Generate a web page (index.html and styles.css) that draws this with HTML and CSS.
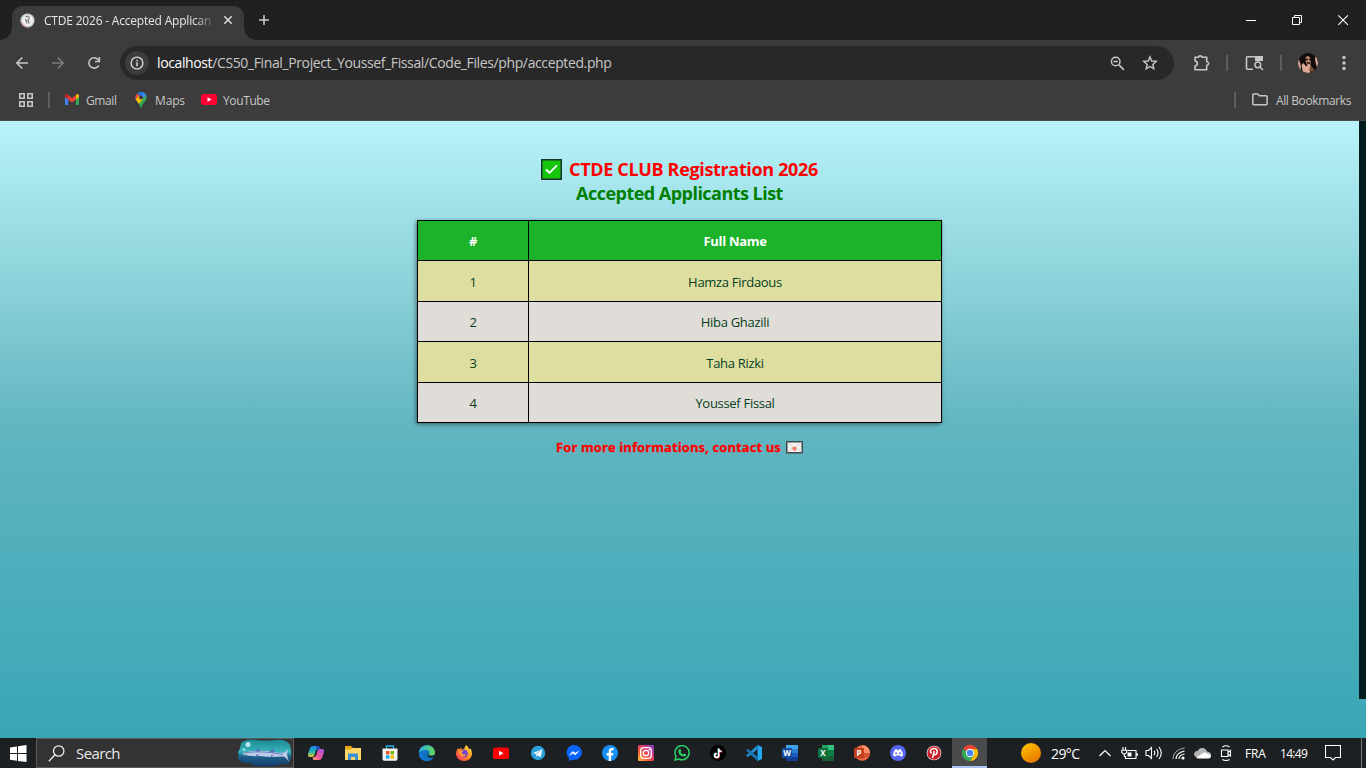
FILE: index.html
```html
<!DOCTYPE html>
<html lang="en">
<head>
<meta charset="utf-8">
<title>CTDE 2026 - Accepted Applicants</title>
<link rel="stylesheet" href="styles.css">
</head>
<body>
<div class="screen">
  <header class="tabstrip">
    <div class="tab">
      <svg class="favicon" width="15" height="15" viewBox="0 0 15 15"><circle cx="7.500" cy="7.500" r="7" fill="#eee"/><circle cx="7.500" cy="7.500" r="6.200" fill="none" stroke="#aeb9c4" stroke-width=".8"/><path d="M5.500 4.200C7 2.800 9.500 3.200 9.200 5.400 8.900 7.400 6.500 7 6.200 9M8.300 7.200l.8 3.500M5.500 6l1.500 4.500" fill="none" stroke="#858585" stroke-width="1.200"/><path d="M1.500 9c.8 3 3 4.500 5 4.800" stroke="#d77f7f" fill="none"/></svg>
      <span class="tab-title">CTDE 2026 - Accepted Applican</span>
      <svg class="tab-close" width="10" height="10" viewBox="0 0 10 10"><path d="M1.300 1.300l7.400 7.400M8.700 1.300L1.300 8.700" stroke="#dedede" stroke-width="1.500"/></svg>
    </div>
    <svg class="newtab" width="12" height="12" viewBox="0 0 12 12"><path d="M6 1v10M1 6h10" stroke="#d0d0d0" stroke-width="1.500"/></svg>
    <div class="winctl">
      <svg width="46" height="40" viewBox="0 0 46 40"><path d="M18 20.500h10" stroke="#fff"/></svg>
      <svg width="46" height="40" viewBox="0 0 46 40"><path d="M18.500 17.500h7v7h-7zM20.500 17.500v-2h7v7h-2" fill="none" stroke="#fff"/></svg>
      <svg width="46" height="40" viewBox="0 0 46 40"><path d="M18.300 15.300l9.600 9.600M27.900 15.300l-9.600 9.600" stroke="#fff" stroke-width="1.100"/></svg>
    </div>
  </header>

  <nav class="toolbar">
    <svg class="back" width="14" height="14" viewBox="0 0 14 14"><path d="M13 7H2M7.300 1.500L1.800 7l5.500 5.500" fill="none" stroke="#c7c7c7" stroke-width="1.600"/></svg>
    <svg class="forward" width="14" height="14" viewBox="0 0 14 14"><path d="M1 7h11M6.700 1.500L12.200 7l-5.500 5.500" fill="none" stroke="#7c7c7c" stroke-width="1.600"/></svg>
    <svg class="reload" width="14" height="14" viewBox="0 0 14 14"><path d="M11.700 9.300A5.200 5.200 0 1 1 11 3.500L12.300 5" fill="none" stroke="#c7c7c7" stroke-width="1.600"/><path d="M12.400 1v4.400H8" fill="none" stroke="#c7c7c7" stroke-width="1.500"/></svg>
    <div class="omnibox">
      <span class="info"><svg width="14" height="14" viewBox="0 0 14 14"><circle cx="7" cy="7" r="5.900" fill="none" stroke="#d6d6d6" stroke-width="1.400"/><path d="M7 6.200V10.300M7 3.700v1.500" stroke="#d6d6d6" stroke-width="1.500"/></svg></span>
      <span class="url"><b>localhost</b>/CS50_Final_Project_Youssef_Fissal/Code_Files/php/accepted.php</span>
      <svg class="zoomout" width="15" height="15" viewBox="0 0 15 15"><circle cx="5.700" cy="5.500" r="4.300" fill="none" stroke="#c7c7c7" stroke-width="1.500"/><path d="M3.500 5.500h4.400M8.900 8.900l5 5" stroke="#c7c7c7" stroke-width="1.500"/></svg>
      <svg class="star" width="16" height="16" viewBox="0 0 16 16"><path d="M8 1.900l1.750 4.100 4.500.4-3.400 3 1 4.400L8 11.500l-3.850 2.300 1-4.400-3.400-3 4.500-.4z" fill="none" stroke="#c7c7c7" stroke-width="1.400"/></svg>
    </div>
    <svg class="ext" width="18" height="18" viewBox="0 0 18 18"><path d="M2 3.200h3.600c.2-1.800 3.200-1.800 3.400 0h4.700v4.600c2.600.2 2.600 3.200 0 3.400v4.500H2v-3.600c3-.5 3-4.700 0-5.200z" fill="none" stroke="#c7c7c7" stroke-width="1.600" stroke-linejoin="round"/></svg>
    <i class="bar b1"></i>
    <svg class="lens" width="19" height="16" viewBox="0 0 19 16"><path d="M8 14.200H2.500a1 1 0 0 1-1-1V2.800a1 1 0 0 1 1-1H16a1 1 0 0 1 1 1V6" fill="none" stroke="#c7c7c7" stroke-width="1.600"/><path d="M10 1h8v5h-8z" fill="#c7c7c7"/><circle cx="12.800" cy="9.800" r="2.900" fill="none" stroke="#c7c7c7" stroke-width="1.500"/><path d="M15 12l3 3" stroke="#c7c7c7" stroke-width="1.500"/></svg>
    <i class="bar b2"></i>
    <svg class="avatar" width="20" height="20" viewBox="0 0 20 20"><clipPath id="av"><circle cx="10" cy="10" r="10"/></clipPath><g clip-path="url(#av)"><path d="M0 0h20v20H0z" fill="#120d0c"/><path d="M0 5q3 4 3 12H0zM17 4h3v12q-3-5-3-12z" fill="#d3a596"/><path d="M7.500 4.500q2-3 4.500 0l1 6q-3 3-5 0z" fill="#c0896f"/><path d="M7 6.500h3M11 6.500h2M8.500 10h4" stroke="#241513" stroke-width="1.500"/><path d="M3.500 12l2-2 2.500 3.500 3-2.500 2 1-1.500 4.500 1 3.500H5z" fill="#dca891"/><path d="M12.500 12l4 5-2 2-3-1z" fill="#7c4c3b"/></g></svg>
    <svg class="dots" width="4" height="16" viewBox="0 0 4 16"><g fill="#c7c7c7"><circle cx="2" cy="2.500" r="1.700"/><circle cx="2" cy="8" r="1.700"/><circle cx="2" cy="13.500" r="1.700"/></g></svg>
  </nav>

  <nav class="bookmarks">
    <svg class="apps" width="14" height="14" viewBox="0 0 14 14"><path d="M.8.8h4.400v4.400H.8zM8.800.8h4.400v4.400H8.800zM.8 8.800h4.400v4.400H.8zM8.800 8.800h4.400v4.400H8.800z" fill="none" stroke="#c7c7c7" stroke-width="1.600"/></svg>
    <i class="bar b3"></i>
    <svg class="gm" width="14" height="11" viewBox="0 0 14 11"><path d="M0 1.500L3.200 4v7H1a1 1 0 0 1-1-1z" fill="#4285f4"/><path d="M14 1.500L10.800 4v7H13a1 1 0 0 0 1-1z" fill="#34a853"/><path d="M10.800 1L12.300.1Q14 0 14 2v1l-3.200 2.700z" fill="#fbbc04"/><path d="M0 3V2Q0 0 1.700.1L3.200 1v4.700z" fill="#c5221f"/><path d="M3.200.9L7 3.900 10.800.9v4.800L7 8.600 3.200 5.700z" fill="#ea4335"/></svg>
    <span class="bm t-gmail">Gmail</span>
    <svg class="mp" width="12" height="16" viewBox="0 0 12 16"><clipPath id="pin"><path d="M6 0a5.600 5.600 0 0 1 5.600 5.600C11.600 9 7.800 10 6.600 15.300q-.6 1-1.200 0C4.200 10 .4 9 .4 5.600A5.600 5.600 0 0 1 6 0z"/></clipPath><g clip-path="url(#pin)"><path d="M0 0h12v16H0z" fill="#34a853"/><path d="M0 10L11 0H5L0 6z" fill="#4285f4"/><path d="M5 0h7v3L6 8z" fill="#4285f4"/><path d="M0 0h2.500L6 4 1 8H0z" fill="#ea4335"/><path d="M0 8l4-4 4 3-5 6z" fill="#fbbc04"/><path d="M3 0h6L6 4 2 2z" fill="#1a73e8"/></g><circle cx="6" cy="5.600" r="2" fill="#3c3c3c"/></svg>
    <span class="bm t-maps">Maps</span>
    <svg class="yt" width="16" height="11" viewBox="0 0 16 11"><rect width="16" height="11" rx="2.500" fill="#ff0033"/><path d="M6.500 3.200v4.600l4-2.300z" fill="#fff"/></svg>
    <span class="bm t-yt">YouTube</span>
    <i class="bar b4"></i>
    <svg class="folder" width="16" height="13" viewBox="0 0 16 13"><path d="M.8 10.800V1.900A1 1 0 0 1 1.800.9h4l1.700 1.800h6.600a1 1 0 0 1 1 1v7.100a1 1 0 0 1-1 1H1.800a1 1 0 0 1-1-1z" fill="none" stroke="#c7c7c7" stroke-width="1.500"/></svg>
    <span class="bm t-all">All Bookmarks</span>
  </nav>

  <div class="viewport">
    <main class="page">
      <h1 class="title">
        <span class="line1"><svg width="21" height="21" viewBox="0 0 21 21"><rect x=".75" y=".75" width="19.500" height="19.500" fill="#16c60c" stroke="#18312c" stroke-width="1.500"/><path d="M5 10.500l3.500 3.300L16 6.300" fill="none" stroke="#fff" stroke-width="1.900"/></svg><span class="red">CTDE CLUB Registration 2026</span></span>
        <span class="green">Accepted Applicants List</span>
      </h1>
      <div class="list">
        <div class="th">#</div><div class="th">Full Name</div>
        <div>1</div><div>Hamza Firdaous</div>
        <div class="alt">2</div><div class="alt">Hiba Ghazili</div>
        <div>3</div><div>Taha Rizki</div>
        <div class="alt">4</div><div class="alt">Youssef Fissal</div>
      </div>
      <p class="contact"><span class="contact-text">For more informations, contact us</span><svg width="17" height="13" viewBox="0 0 17 13"><rect x=".75" y=".75" width="15.500" height="11" fill="#f1f0f0" stroke="#40484b" stroke-width="1.500"/><path d="M1.500 1.500l7 5.500 7-5.500M1.500 11.200l5-4.500M15.500 11.200l-5-4.500" fill="none" stroke="#d4d4d4" stroke-width=".8"/><circle cx="8.500" cy="7.700" r="2.100" fill="#ed7864"/></svg></p>
    </main>
    <div class="scroll"></div>
  </div>

  <footer class="taskbar">
    <svg class="win" width="17" height="17" viewBox="0 0 17 17"><path d="M0 2.400L7 1.400v6.700H0zM8 1.200L16.500 0v8.100H8zM0 9h7v6.700l-7-1zM8 9h8.500v8L8 15.900z" fill="#fff"/></svg>
    <div class="search">
      <svg class="glass" width="17" height="17" viewBox="0 0 17 17"><circle cx="10.700" cy="6" r="5.200" fill="none" stroke="#eee" stroke-width="1.300"/><path d="M7 9.800L.8 16.300" stroke="#eee" stroke-width="1.300"/></svg>
      <span class="search-text">Search</span>
      <svg class="fish" width="56" height="28" viewBox="0 0 56 28"><defs><linearGradient id="sea" x1="0" y1="0" x2="0" y2="1"><stop offset="0" stop-color="#1b8791"/><stop offset=".45" stop-color="#37b3ba"/><stop offset=".65" stop-color="#1c5e88"/><stop offset="1" stop-color="#153e6c"/></linearGradient></defs><path d="M4 4Q10-1 20 1q9 1 18 0 12-1 15 5 2 7 1 13-1 7-10 6-8 3-18 2-10 1-12-3Q2 25 1 19q1-3 0-6 2-2 3-9z" fill="url(#sea)"/><path d="M5 15q3-2.500 11-3 10-1 20 1 6 1 11 .5 3-1 4-4l-1 6 2 8q-2-5-6-6-13 1-23-.5-9 1-18-2z" fill="#bccbe8"/><path d="M18 12l4-3 1 4M32 13l5-4v5M20 15l-2 3 4-2M34 16v2l3-2" fill="#566fb0"/><path d="M10 13.500q15-2 36 2" stroke="#7181bf" fill="none"/><circle cx="11" cy="5.500" r="2.500" fill="#b6e9ef"/><circle cx="7" cy="10.500" r="1.500" fill="#8ed8df"/><circle cx="9" cy="14" r=".6" fill="#222"/></svg>
    </div>
    <div class="apps-row">
      <span><svg viewBox="0 0 16 16"><defs><linearGradient id="cpa" x1="0" y1="0" x2="0" y2="1"><stop stop-color="#168be9"/><stop offset=".55" stop-color="#27b6ae"/><stop offset="1" stop-color="#f5c324"/></linearGradient><linearGradient id="cpb" x1="1" y1="0" x2="0" y2="1"><stop stop-color="#a455ed"/><stop offset=".6" stop-color="#ed5798"/><stop offset="1" stop-color="#ffa55f"/></linearGradient></defs><path d="M5 1h5q1 0 1.600 2L8 5 6.500 10Q6 12 4 12H2q-3 0-1.700-4L2 3Q3 1 5 1z" fill="url(#cpa)"/><path d="M11 15H6q-1 0-1.600-2L8 11l1.500-5Q10 4 12 4h2q3 0 1.700 4L14 13q-1 2-3 2z" fill="url(#cpb)"/><path d="M8 1h2.500q1.200.6 1.600 3Q10 4 9 6z" fill="#244dc4"/></svg></span>
      <span><svg viewBox="0 0 16 16"><path d="M0 1h6l2 2h8v4H0z" fill="#e3a51b"/><path d="M0 4.500h6L8 3h8v12H0z" fill="#ffd765"/><path d="M3 15V8.500h10V15h-3v-3H6v3z" fill="#388ed6"/></svg></span>
      <span><svg viewBox="0 0 16 16"><path d="M4.500 4V1h7v3" fill="none" stroke="#2aaae2" stroke-width="1.300"/><path d="M.5 3.500h15V14a1.700 1.700 0 0 1-1.700 1.700H2.200A1.700 1.700 0 0 1 .5 14z" fill="#f2f2f2"/><path d="M4 6h3.400v3.400H4z" fill="#f25022"/><path d="M8.500 6H12v3.400H8.500z" fill="#7fba00"/><path d="M4 10.300h3.400v3.300H4z" fill="#00a4ef"/><path d="M8.500 10.300H12v3.300H8.500z" fill="#ffb900"/></svg></span>
      <span><svg viewBox="0 0 16 16"><defs><linearGradient id="edg"><stop stop-color="#28aee8"/><stop offset="1" stop-color="#68d851"/></linearGradient></defs><circle cx="8" cy="8" r="8" fill="#0e70bd"/><path d="M0 8C0-1 14-3 16 7q0 4-4 4-4 0-2-2 1-4-3-4-5 0-7 3z" fill="url(#edg)"/><path d="M7 5Q1 11 8 14q3 1 6-1-2 3-6 3Q2 16 0 11q0-5 7-6z" fill="#1475d1"/><path d="M9 8.500q-1.500 3 2 4 2.500.5 4.500-.800l.5-1.700q-3 1.200-5.500.2-1.500-.7-1.500-1.700z" fill="#1d2022"/></svg></span>
      <span><svg viewBox="0 0 16 16"><defs><linearGradient id="ffx" x1="1" y1="0" x2="0" y2="1"><stop stop-color="#fff13f"/><stop offset=".5" stop-color="#ff8a22"/><stop offset="1" stop-color="#f72967"/></linearGradient></defs><path d="M2 3l1 1.500 2-2 .5 2L8 4l2-4q2 1 3 4l1.500-.5Q16 6 16 8.500C16 13 12.500 16 8 16S0 12.500 0 8.500Q0 5 2 3z" fill="url(#ffx)"/><circle cx="8" cy="8.600" r="3.800" fill="#7542dc"/><path d="M3 5.500l5 .5q-3 1-1.500 3 2 1 3.500-.5-.5 4-4.500 3Q3 10 3 5.500z" fill="#ff9934"/></svg></span>
      <span><svg viewBox="0 0 16 16"><rect y="2.500" width="16" height="11.500" rx="2.600" fill="#f00"/><path d="M6 5.800v5l4.500-2.500z" fill="#fff"/></svg></span>
      <span><svg viewBox="0 0 16 16"><circle cx="8" cy="8" r="7.200" fill="#2ba0da"/><path d="M3 8l9.300-3.800-1.700 8-2.700-1.800-1.400 1.400-.4-2.500z" fill="#fff"/><path d="M6 9.300l4.500-3.500" stroke="#7abce0"/></svg></span>
      <span><svg viewBox="0 0 16 16"><path d="M8 0a7.800 7.400 0 0 1 0 15l-2-.3L2.900 16v-3A7.600 7.600 0 0 1 8 0z" fill="#0866ff"/><path d="M3.800 9.900l3-3.300 2.500 1.700 3-1.800-3 3.300-2.500-1.700z" fill="#fff" stroke="#fff" stroke-width=".8"/></svg></span>
      <span><svg viewBox="0 0 16 16"><circle cx="8" cy="8" r="8" fill="#1790f5"/><path d="M6.700 16v-5.500H4.600V8h2.100V6.200Q6.700 3 10 3h1.600v2.300h-1.200q-1.300 0-1.300 1.100V8h2.300l-.4 2.500H9.100V16z" fill="#fff"/></svg></span>
      <span><svg viewBox="0 0 16 16"><defs><linearGradient id="insta" x1="0" y1="1" x2="1" y2="0"><stop stop-color="#ffc53b"/><stop offset=".35" stop-color="#fb5637"/><stop offset=".65" stop-color="#d73282"/><stop offset="1" stop-color="#7545d1"/></linearGradient></defs><rect width="16" height="16" rx="1.500" fill="url(#insta)"/><rect x="2.700" y="2.700" width="10.600" height="10.600" rx="3" fill="none" stroke="#fff" stroke-width="1.300"/><circle cx="8" cy="8" r="2.700" fill="none" stroke="#fff" stroke-width="1.300"/><circle cx="11.300" cy="4.700" r=".8" fill="#fff"/></svg></span>
      <span><svg viewBox="0 0 16 16"><path d="M1 15l1-3.600A7.100 7.100 0 1 1 4.800 14z" fill="none" stroke="#28cf65" stroke-width="1.500"/><path d="M5 4.300q1-.8 1.700.3l.6 1.500-.8 1q1 1.800 2.700 2.500l1-1 2 1q0 2.200-2.400 2Q5 11 4.300 6.700q0-1.700.7-2.400z" fill="#28cf65"/></svg></span>
      <span><svg viewBox="0 0 16 16"><circle cx="8" cy="8" r="8" fill="#000"/><g fill="none" stroke-width="1.500"><path d="M8.300 3.300v6.900a2 2 0 1 1-2-2M8.300 3.800q.5 2.200 3 2.400" stroke="#25f4ee"/><path d="M9.100 4v6.900a2 2 0 1 1-2-2M9.100 4.500q.5 2.200 3 2.400" stroke="#fe2c55"/><path d="M8.700 3.600v6.900a2 2 0 1 1-2-2M8.700 4.100q.5 2.200 3 2.400" stroke="#fff"/></g></svg></span>
      <span><svg viewBox="0 0 16 16"><path d="M11.500 0L16 2v12l-4.500 2z" fill="#23a9f2"/><path d="M11.500 0v4.300L2 12 0 10.700z" fill="#218fce"/><path d="M11.500 16v-4.300L2 4 0 5.300z" fill="#1679bd"/></svg></span>
      <span><svg viewBox="0 0 16 16"><path d="M4 0h12v4H4z" fill="#41a5ee"/><path d="M4 4h12v4H4z" fill="#2b7cd3"/><path d="M4 8h12v8H4z" fill="#185abd"/><path d="M4 12h12v4H4z" fill="#103f91"/><rect y="3" width="10" height="10" rx=".8" fill="#164f9f"/><text x="5" y="11" text-anchor="middle" class="glyph">W</text></svg></span>
      <span><svg viewBox="0 0 16 16"><path d="M4 0h6v5H4z" fill="#21a366"/><path d="M10 0h6v5h-6z" fill="#33c481"/><path d="M4 5h12v6H4z" fill="#107c41"/><path d="M4 11h12v5H4z" fill="#185c37"/><rect y="3" width="10" height="10" rx=".8" fill="#0d713b"/><text x="5" y="11" text-anchor="middle" class="glyph">X</text></svg></span>
      <span><svg viewBox="0 0 16 16"><circle cx="8.300" cy="8" r="7.700" fill="#ed6c47"/><path d="M8.300.3A7.700 7.700 0 0 1 16 8H8.300z" fill="#ff8f6b"/><path d="M1 8h15a7.700 7.700 0 0 1-15 0z" fill="#d35230"/><rect y="3" width="10" height="10" rx=".8" fill="#c43e1c"/><text x="5" y="11" text-anchor="middle" class="glyph">P</text></svg></span>
      <span><svg viewBox="0 0 16 16"><circle cx="8" cy="8" r="8" fill="#5865f2"/><path d="M5 4.400l1.700-.3.500.8h1.600l.5-.8 1.700.3q2 3 1.900 6.400l-2 1-.8-1.200H5.900l-.8 1.200-2-1Q3 7.400 5 4.400z" fill="#fff"/><circle cx="6.100" cy="8.200" r="1" fill="#5865f2"/><circle cx="9.900" cy="8.200" r="1" fill="#5865f2"/></svg></span>
      <span><svg viewBox="0 0 16 16"><circle cx="8" cy="8" r="7.300" fill="#fff"/><circle cx="8" cy="8" r="6.700" fill="#cb1f27"/><path d="M5.500 8.400C3 6 5.500 3.200 8.500 3.500c4 .5 3.300 6-.1 6.200q-1 0-1.400-.8M8.300 6L6.500 13" fill="none" stroke="#fff" stroke-width="1.500"/></svg></span>
      <span class="active"><svg viewBox="0 0 16 16"><path d="M8 8L1 4a8 8 0 0 1 14 0z" fill="#ea4335"/><path d="M8 8l-7-4a8 8 0 0 0 7 12l4-6z" fill="#34a853"/><path d="M8 4h7a8 8 0 0 1-7 12l4-6z" fill="#fbbc04"/><circle cx="8" cy="8" r="4.200" fill="#fff"/><circle cx="8" cy="8" r="3.200" fill="#4285f4"/></svg></span>
    </div>
    <div class="tray">
      <i class="sun"></i><span class="temp">29°C</span>
      <svg class="caret" width="12" height="8" viewBox="0 0 12 8"><path d="M.5 7L6 1.500 11.500 7" fill="none" stroke="#fff" stroke-width="1.200"/></svg>
      <svg class="batt" width="17" height="13" viewBox="0 0 17 13"><path d="M6.500 3.500h8.500v8H4.500V9M16.200 6v3M2 0v3M4.500 0v3M.7 3.300h5v2L4.200 7H2.500L.8 5.500zM3.300 7v3" fill="none" stroke="#fff" stroke-width="1.100"/><path d="M6.500 5.500h4v4h-4z" fill="#fff"/></svg>
      <svg class="vol" width="18" height="14" viewBox="0 0 18 14"><path d="M1 4.500h2.500l3-3v11l-3-3H1zM9 4.700q1.500 2.300 0 4.600M11.500 3q3 4 0 8M14 1q4.500 6 0 12" fill="none" stroke="#fff" stroke-width="1.100"/></svg>
      <svg class="wifi" width="14" height="14" viewBox="0 0 14 14"><g fill="none" stroke="#fff"><path d="M1 13Q1 4 12.500 2" stroke="#aaa"/><path d="M4 13Q4 7 12.500 5M7 13Q7 9 12.500 8" stroke-width="1.200"/></g><circle cx="11" cy="12" r="1.600" fill="#fff"/></svg>
      <svg class="cloud" width="17" height="11" viewBox="0 0 17 11"><path d="M3 9Q0 8.500 0 6q.5-3 3.500-3Q6-1 9.500 0q2.500.7 3.500 3.400Q17 4 17 7q-.5 3-3 3z" fill="#b5b5b5"/><path d="M2 9.600L8.500 5.500q2-2 5 .4Q17 6 17 8.500q-.5 2-2.500 2H4z" fill="#fff"/></svg>
      <svg class="cam" width="12" height="16" viewBox="0 0 12 16"><path d="M1.500 5h6.500v6.500H1.500zM8 7.500l2.500-2v5.500l-2.500-2M2.500 2Q6-.5 9.500 2M2.500 14.500q3.500 2 7 0" fill="none" stroke="#fff" stroke-width="1.100"/></svg>
      <span class="lang">FRA</span><span class="clock">14:49</span>
      <svg class="note" width="16" height="16" viewBox="0 0 16 16"><path d="M.5.500h15v12h-5L8 15l-2.500-2.500h-5z" fill="none" stroke="#fff" stroke-width="1.100"/></svg>
      <i class="desk"></i>
    </div>
  </footer>
</div>
</body>
</html>
```
FILE: styles.css
```css
* { box-sizing: border-box; }
body { margin: 0; font-family: "Open Sans", "Noto Sans", sans-serif; }
svg { display: block; flex: none; }
span { white-space: nowrap; }
.screen { width: 1366px; height: 768px; overflow: hidden; display: flex; flex-direction: column; background: #3c3c3c; }

.tabstrip { height: 40px; flex: none; background: #1f2120; display: flex; align-items: center; padding-left: 12px; }
.tab { position: relative; width: 232px; height: 34px; margin-top: 6px; background: #3c3c3c; border-radius: 10px 10px 0 0; display: flex; align-items: center; padding: 0 0 6px 8px; }
.tab::before, .tab::after { content: ""; position: absolute; bottom: 0; width: 12px; height: 12px; }
.tab::before { left: -12px; background: radial-gradient(circle at 0 0, transparent 11.5px, #3c3c3c 12px); }
.tab::after { right: -12px; background: radial-gradient(circle at 100% 0, transparent 11.5px, #3c3c3c 12px); }
.tab-title { margin-left: 9px; width: 168px; font-size: 12px; color: #e6e6e6; letter-spacing: -.2px; -webkit-mask-image: linear-gradient(90deg, #000 150px, transparent 172px); mask-image: linear-gradient(90deg, #000 150px, transparent 172px); }
.tab-close { margin-left: 11px; }
.newtab { margin-left: 14px; }
.winctl { margin-left: auto; display: flex; }

.toolbar { height: 46px; flex: none; display: flex; align-items: center; padding-left: 15px; }
.forward { margin-left: 22px; }
.reload { margin-left: 22px; }
.omnibox { width: 1054px; height: 34px; margin-left: 19px; border-radius: 17px; background: #282828; display: flex; align-items: center; padding-left: 5px; }
.info { width: 24px; height: 24px; border-radius: 50%; background: #3c3c3c; display: flex; align-items: center; justify-content: center; }
.url { margin-left: 8px; width: 480px; font-size: 14px; color: #c7c7c7; letter-spacing: -.38px; padding-bottom: 2px; }
.url b { font-weight: 400; color: #fff; }
.zoomout { margin-left: 473px; }
.star { margin-left: 17px; }
.ext { margin-left: 19px; }
.bar { width: 2px; height: 16px; background: #5d5d5d; }
.b1 { margin-left: 15px; }
.lens { margin-left: 17px; }
.b2 { margin-left: 16px; }
.avatar { margin-left: 16px; }
.dots { margin-left: 24px; }

.bookmarks { height: 35px; flex: none; display: flex; align-items: center; padding: 0 14px 7px 19px; border-bottom: 1px solid #4a4a4a; }
.bm { font-size: 12px; color: #c7c7c7; letter-spacing: -.38px; padding-top: 1px; }
.b3 { margin-left: 15px; }
.gm { margin-left: 15px; }
.t-gmail { margin-left: 7px; width: 49px; }
.t-maps { margin-left: 8px; width: 46px; letter-spacing: -.15px; }
.t-yt { margin-left: 6px; }
.b4 { margin-left: auto; }
.folder { margin-left: 16px; }
.t-all { margin-left: 8px; width: 76px; }

.viewport { height: 617px; flex: none; display: flex; background: linear-gradient(#b8f3fa 0, #86cdd5 30%, #60b5c0 50%, #39a6b6 100%); }
.page { flex: 1; display: flex; flex-direction: column; align-items: center; padding-top: 36px; }
.title { margin: 0; display: flex; flex-direction: column; align-items: center; font-size: 18px; line-height: 24px; font-weight: 700; }
.line1 { display: flex; align-items: center; gap: 7px; }
.red { color: #f00; letter-spacing: -.34px; }
.green { color: #008000; letter-spacing: -.53px; }
.list { margin-top: 15px; width: 525px; display: grid; grid-template-columns: 110px 412px; grid-template-rows: 39px 40px 39px 40px 39px; gap: 1px; background: #000; border: 1px solid #000; box-shadow: -1px 1px 4px rgba(0, 0, 0, .5); }
.list div { display: flex; align-items: center; justify-content: center; background: #dedea0; color: #063f22; font-size: 13px; letter-spacing: -.3px; padding-top: 2px; }
.list .alt { background: #e0dcd8; padding-top: 0; }
.list .th { background: #1cb229; color: #fff; font-weight: 700; padding-top: 0; }
.contact { margin: 14px 0 0; height: 20px; display: flex; align-items: center; gap: 5px; font-size: 13px; font-weight: 700; color: #f00; }
.contact-text { letter-spacing: .1px; -webkit-text-stroke: .3px #f00; }
.scroll { width: 7px; height: 578px; background: #021c1d; }

.taskbar { height: 30px; flex: none; display: flex; align-items: center; background: #1d2022; color: #fff; }
.win { margin-left: 10px; }
.search { width: 258px; height: 30px; margin-left: 9px; background: #333; border: 1px solid #5c5c5c; display: flex; align-items: center; padding-left: 11px; }
.search-text { margin-left: 11px; font-size: 15px; color: #e8e8e8; width: 60px; letter-spacing: -.6px; }
.fish { margin-left: 101px; }
.apps-row { flex: none; margin-left: 3px; width: 691px; height: 30px; display: flex; }
.apps-row span { flex: none; width: 36px; height: 30px; display: flex; align-items: center; justify-content: center; }
.apps-row span:nth-child(-n+7) { width: 37px; }
.apps-row svg { width: 16px; height: 16px; }
.apps-row .active { background: #4a4b4d; border-bottom: 2px solid #a9c4f5; padding-top: 2px; width: 35px; }
.glyph { font: 700 8px "Open Sans", sans-serif; fill: #fff; }
.tray { flex: 1; display: flex; align-items: center; height: 30px; margin-left: 33px; }
.sun { flex: none; width: 20px; height: 20px; border-radius: 50%; background: linear-gradient(150deg, #ffc900, #e66b00); }
.temp { margin-left: 10px; width: 39px; flex: none; font-size: 14px; letter-spacing: -.6px; }
.caret { margin-left: 9px; }
.batt { margin-left: 10px; }
.vol { margin-left: 7px; }
.wifi { margin-left: 9px; }
.cloud { margin-left: 8px; }
.cam { margin-left: 9px; }
.lang { margin-left: 13px; width: 22px; font-size: 12px; letter-spacing: -.2px; }
.clock { margin-left: 13px; width: 28px; font-size: 12px; letter-spacing: -.7px; }
.note { margin-left: 17px; }
.desk { margin-left: auto; width: 5px; height: 30px; border-left: 1px solid #777; }
```
